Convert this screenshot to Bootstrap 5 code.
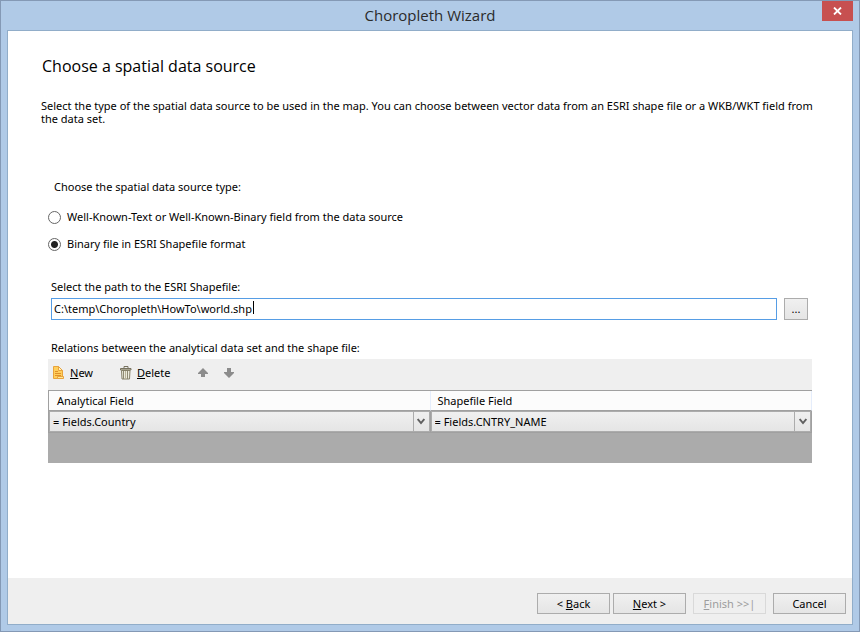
<!DOCTYPE html>
<html lang="en">
<head>
<meta charset="utf-8">
<meta name="viewport" content="width=device-width, initial-scale=1">
<title>Choropleth Wizard</title>
<link href="https://cdn.jsdelivr.net/npm/bootstrap@5.3.0/dist/css/bootstrap.min.css" rel="stylesheet">
<style>
body { font: 11px/14px "Noto Sans", "Open Sans", sans-serif; color: #000; }
.wizard { background: #b0cae7; border: 1px solid #8499b5; padding: 0 6px 6px; }
.titlebar { height: 29px; }
.titlebar h1 { font: 15px/28px "Open Sans", "Noto Sans", sans-serif; color: #2b2b2b; }
.close-btn { top: 0; right: 6px; width: 31px; height: 20px; background: #c75050; }
.client { border: 1px solid #91adc9; }
.intro { padding: 25px 34px 0 33px; }
.intro h2 { font: 16px/20px "Open Sans", "Noto Sans", sans-serif; margin-bottom: 23px; padding-left: 1px; }
.intro p { line-height: 13px; }
.fields { padding: 55px 40px 24px; }
.source-type { margin-bottom: 16px; }
.source-type legend { font-size: 11px; line-height: 14px; padding-left: 6px; margin-bottom: 16px; }
.source-type .option { gap: 6px; margin-bottom: 13px; }
.source-type input { appearance: none; width: 13px; height: 13px; border: 1px solid #666; border-radius: 50%; background: #fff; }
.source-type input:checked { background: radial-gradient(circle, #222 0 3px, #fff 4px); }
.caption { padding-left: 3px; margin-bottom: 4px; }
.path-row { gap: 7px; padding: 0 4px 0 3px; margin-bottom: 21px; }
.path-input { height: 22px; border: 1px solid #569de5; padding: 0 3px 2px 2px; color: #000; outline: 0; }
.caret { left: 202px; top: 3px; width: 1px; height: 13px; background: #000; }
.win-btn { height: 21px; border: 1px solid #acacac; border-radius: 0; background: linear-gradient(#f0f0f0, #e5e5e5); font-size: 11px; line-height: 14px; padding: 0; color: #000; width: 73px; }
.win-btn:disabled { border-color: #d9d9d9; background: #efefef; color: #9d9d9d; opacity: 1; }
.browse-btn { width: 24px; height: 22px; }
.tools { height: 31px; background: #efefef; padding: 0 4px 3px; }
.tool-btn { border: 0; background: none; padding: 0; color: #000; gap: 5px; }
.tool-btn svg, .close-btn svg, .pick svg { display: block; }
.delete-btn { margin-left: 27px; }
.up-btn { margin-left: 28px; }
.down-btn { margin-left: 16px; }
.relations { background: #ababab; padding-bottom: 30px; }
.relations table { table-layout: fixed; border-collapse: separate; border-spacing: 0; border: 1px solid #a0a0a0; border-right: 0; }
.relations th { height: 20px; background: #fcfcfc; font-weight: 400; padding: 0 8px; border-right: 1px solid #e5edfb; border-bottom: 1px solid #a0a0a0; }
.relations th + th { padding-left: 7px; }
.relations td { padding: 0 1px 0 0; background: #a0a0a0; }
.pick select { appearance: none; height: 21px; border: 1px solid #acacac; border-radius: 0; background: linear-gradient(#f0f0f0, #e5e5e5); padding: 0 18px 0 3px; color: #000; }
.pick .arrow { top: 1px; right: 1px; bottom: 1px; width: 16px; border-left: 1px solid #acacac; pointer-events: none; }
.buttons { background: #efefef; padding: 15px 6px 10px; }
.buttons .gap-a { margin-left: 3px; }
.buttons .gap-b { margin-left: 7px; }
</style>
<script src="https://cdn.jsdelivr.net/npm/bootstrap@5.3.0/dist/js/bootstrap.bundle.min.js"></script>
</head>
<body>
<div class="wizard min-vh-100 d-flex flex-column position-relative">
  <header class="titlebar text-center">
    <h1 class="m-0 fw-normal">Choropleth Wizard</h1>
    <button type="button" class="close-btn position-absolute border-0 p-0 d-flex align-items-center justify-content-center" aria-label="Close">
      <svg width="9" height="8" viewBox="0 0 9 8" aria-hidden="true"><path d="M1 .5l7 7M8 .5l-7 7" stroke="#fff" stroke-width="1.800"/></svg>
    </button>
  </header>
  <form class="client flex-grow-1 d-flex flex-column bg-white">
    <main class="flex-grow-1">
      <section class="intro">
        <h2 class="fw-normal">Choose a spatial data source</h2>
        <p class="m-0">Select the type of the spatial data source to be used in the map. You can choose between vector data from an ESRI shape file or a WKB/WKT field from the data set.</p>
      </section>
      <section class="fields">
        <fieldset class="source-type">
          <legend>Choose the spatial data source type:</legend>
          <div class="option d-flex align-items-center">
            <input type="radio" name="source" id="wkt" class="m-0"><label for="wkt">Well-Known-Text or Well-Known-Binary field from the data source</label>
          </div>
          <div class="option d-flex align-items-center">
            <input type="radio" name="source" id="shape" class="m-0" checked><label for="shape">Binary file in ESRI Shapefile format</label>
          </div>
        </fieldset>
        <label for="path" class="caption d-block">Select the path to the ESRI Shapefile:</label>
        <div class="path-row d-flex">
          <div class="position-relative flex-grow-1">
            <input type="text" id="path" class="path-input w-100 d-block" value="C:\temp\Choropleth\HowTo\world.shp">
            <span class="caret position-absolute"></span>
          </div>
          <button type="button" class="btn win-btn browse-btn" aria-label="Browse">...</button>
        </div>
        <div class="caption">Relations between the analytical data set and the shape file:</div>
        <div class="tools d-flex align-items-center">
          <button type="button" class="tool-btn d-flex align-items-center">
            <svg width="13" height="14" viewBox="0 0 13 14" aria-hidden="true"><path d="M1.500 .5h5l4 4v8h-9z" fill="#ffcf5c" stroke="#e8a33c"/><path d="M6.500 .5v4h4z" fill="#fff3c4" stroke="#e8a33c"/><path d="M3 5.500h3M3 7.500h6M3 9.500h6" stroke="#e08f2a"/><path d="M5.500 10.500h6v2h-6z" fill="#ffe89a" stroke="#e8a33c"/></svg>
            <span><u>N</u>ew</span>
          </button>
          <button type="button" class="tool-btn delete-btn d-flex align-items-center">
            <svg width="12" height="14" viewBox="0 0 12 14" aria-hidden="true"><path d="M4 2V.5h4V2" fill="none" stroke="#77725f"/><path d="M.5 2.500h10.500v1.500H.5z" fill="#d6d2bd" stroke="#77725f"/><path d="M1.500 4.500h8.500l-.5 8.500H2z" fill="#eceadb" stroke="#858069"/><path d="M3.500 5v8M7.500 5v8" stroke="#8f8a72"/><path d="M5.500 5v8" stroke="#b8b398"/></svg>
            <span><u>D</u>elete</span>
          </button>
          <button type="button" class="tool-btn up-btn" aria-label="Move up">
            <svg width="10" height="10" viewBox="0 0 10 10" aria-hidden="true"><path d="M5 0l5 5v1H7v3H3V6H0V5z" fill="#8c8c8c"/></svg>
          </button>
          <button type="button" class="tool-btn down-btn" aria-label="Move down">
            <svg width="10" height="10" viewBox="0 0 10 10" aria-hidden="true"><path d="M5 10L0 5V4h3V0h4v4h3v1z" fill="#8c8c8c"/></svg>
          </button>
        </div>
        <div class="relations">
          <table class="w-100">
            <thead><tr><th scope="col">Analytical Field</th><th scope="col">Shapefile Field</th></tr></thead>
            <tbody><tr>
              <td><div class="pick position-relative">
                <select class="w-100 d-block" aria-label="Analytical Field"><option>= Fields.Country</option></select>
                <span class="arrow position-absolute d-flex align-items-center justify-content-center"><svg width="8" height="7" viewBox="0 0 8 7" aria-hidden="true"><path d="M.7 1L4 5l3.300-4" fill="none" stroke="#606060" stroke-width="1.900"/></svg></span>
              </div></td>
              <td><div class="pick position-relative">
                <select class="w-100 d-block" aria-label="Shapefile Field"><option>= Fields.CNTRY_NAME</option></select>
                <span class="arrow position-absolute d-flex align-items-center justify-content-center"><svg width="8" height="7" viewBox="0 0 8 7" aria-hidden="true"><path d="M.7 1L4 5l3.300-4" fill="none" stroke="#606060" stroke-width="1.900"/></svg></span>
              </div></td>
            </tr></tbody>
          </table>
        </div>
      </section>
    </main>
    <footer class="buttons d-flex justify-content-end">
      <button type="button" class="btn win-btn">&lt; <u>B</u>ack</button>
      <button type="button" class="btn win-btn gap-a"><u>N</u>ext &gt;</button>
      <button type="button" class="btn win-btn gap-b" disabled><u>F</u>inish &gt;&gt;|</button>
      <button type="button" class="btn win-btn gap-b">Cancel</button>
    </footer>
  </form>
</div>
</body>
</html>
